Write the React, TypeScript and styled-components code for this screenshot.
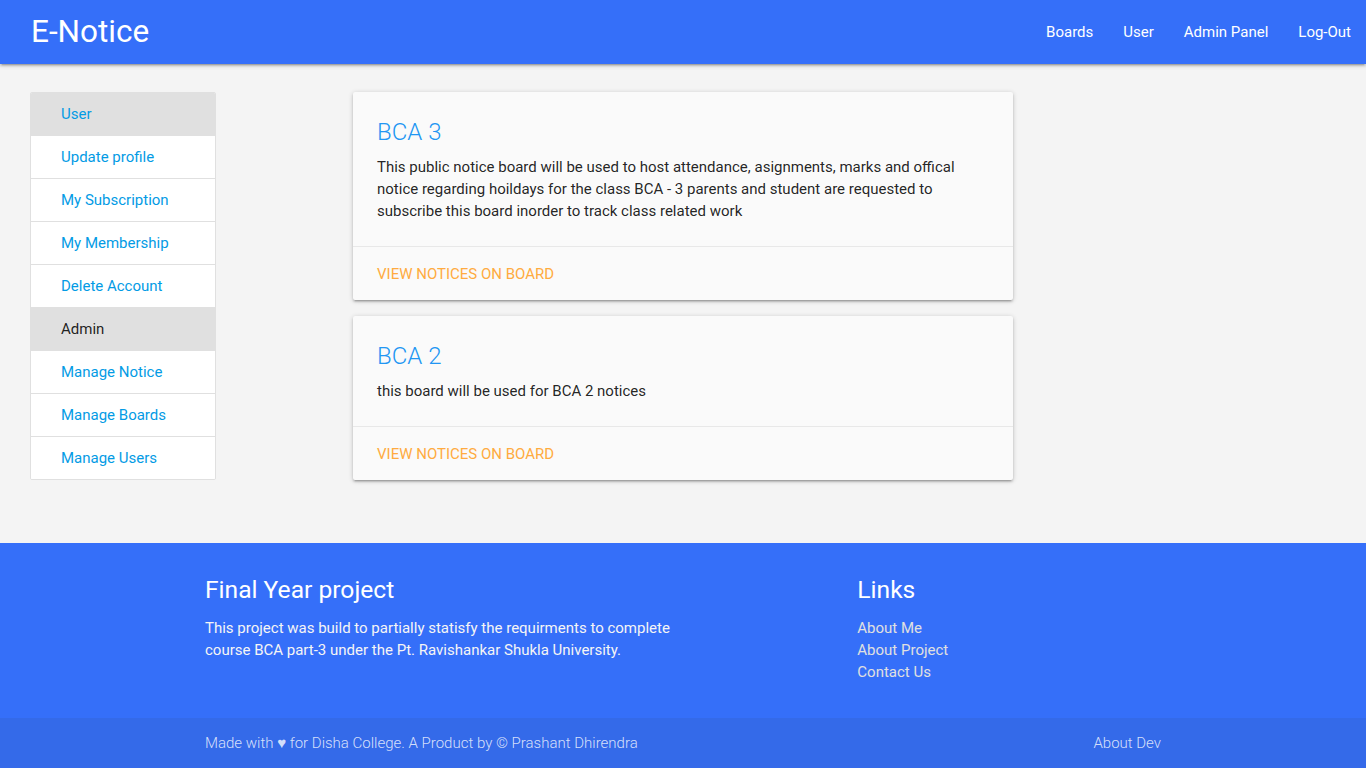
import React, { FC } from 'react'
import styled, { createGlobalStyle } from 'styled-components'

const GlobalStyle = createGlobalStyle`
    html, body {
        margin: 0;
        padding: 0;
    }
    body {
        font-family: Roboto, "Liberation Sans", sans-serif;
        font-size: 15px;
        line-height: 1.5;
        color: rgba(0, 0, 0, 0.87);
        background-color: #f4f4f4;
    }
    * {
        box-sizing: border-box;
    }
    a {
        text-decoration: none;
    }
`

interface Board {
    title: string
    description: string
}

const boards: Board[] = [
    {
        title: 'BCA 3',
        description:
            'This public notice board will be used to host attendance, asignments, marks and offical notice regarding hoildays for the class BCA - 3 parents and student are requested to subscribe this board inorder to track class related work',
    },
    {
        title: 'BCA 2',
        description: 'this board will be used for BCA 2 notices',
    },
]

const userLinks = ['Update profile', 'My Subscription', 'My Membership', 'Delete Account']
const adminLinks = ['Manage Notice', 'Manage Boards', 'Manage Users']

const App: FC = () => {
    return (
        <>
            <GlobalStyle />
            <Nav>
                <Brand href="#">E-Notice</Brand>
                <NavLinks>
                    <NavLink href="#">Boards</NavLink>
                    <NavLink href="#">User</NavLink>
                    <NavLink href="#">Admin Panel</NavLink>
                    <NavLink href="#">Log-Out</NavLink>
                </NavLinks>
            </Nav>

            <Main>
                <Sidebar>
                    <SideItem $header>
                        <SideLink href="#">User</SideLink>
                    </SideItem>
                    {userLinks.map((l) => (
                        <SideItem key={l}>
                            <SideLink href="#">{l}</SideLink>
                        </SideItem>
                    ))}
                    <SideItem $header>
                        <SideLabel>Admin</SideLabel>
                    </SideItem>
                    {adminLinks.map((l) => (
                        <SideItem key={l}>
                            <SideLink href="#">{l}</SideLink>
                        </SideItem>
                    ))}
                </Sidebar>

                <Cards>
                    {boards.map((b) => (
                        <Card key={b.title}>
                            <CardContent>
                                <CardTitle>{b.title}</CardTitle>
                                <CardText>{b.description}</CardText>
                            </CardContent>
                            <CardAction>
                                <ActionLink href="#">View notices on board</ActionLink>
                            </CardAction>
                        </Card>
                    ))}
                </Cards>
            </Main>

            <Footer>
                <FooterRow>
                    <FooterCol>
                        <FooterTitle>Final Year project</FooterTitle>
                        <FooterText>
                            This project was build to partially statisfy the requirments to complete course
                            BCA part-3 under the Pt. Ravishankar Shukla University.
                        </FooterText>
                    </FooterCol>
                    <LinksCol>
                        <FooterTitle>Links</FooterTitle>
                        <FooterList>
                            <li><FooterLink href="#">About Me</FooterLink></li>
                            <li><FooterLink href="#">About Project</FooterLink></li>
                            <li><FooterLink href="#">Contact Us</FooterLink></li>
                        </FooterList>
                    </LinksCol>
                </FooterRow>
                <Copyright>
                    <CopyrightInner>
                        <span>Made with ♥ for Disha College. A Product by © Prashant Dhirendra</span>
                        <CopyLink href="#">About Dev</CopyLink>
                    </CopyrightInner>
                </Copyright>
            </Footer>
        </>
    )
}

export default App

const blue = '#356ff9'

const Nav = styled.nav`
    display: flex;
    align-items: center;
    justify-content: space-between;
    height: 64px;
    padding-left: 31px;
    background-color: ${blue};
    box-shadow: 0 2px 2px 0 rgba(0, 0, 0, 0.14), 0 3px 1px -2px rgba(0, 0, 0, 0.12), 0 1px 5px 0 rgba(0, 0, 0, 0.2);
    position: relative;
    z-index: 2;
`

const Brand = styled.a`
    color: #fff;
    font-size: 31.5px;
    line-height: 64px;
`

const NavLinks = styled.div`
    display: flex;
    height: 100%;
`

const NavLink = styled.a`
    display: flex;
    align-items: center;
    padding: 0 15px;
    color: #fff;
    font-size: 15px;
`

const Main = styled.main`
    display: flex;
    align-items: flex-start;
    gap: 137px;
    padding: 28px 30px 63px;
`

const Sidebar = styled.ul`
    width: 186px;
    margin: 0;
    padding: 0;
    list-style: none;
    border: 1px solid #e0e0e0;
    border-radius: 2px;
    overflow: hidden;
    background-color: #fff;
`

const SideItem = styled.li<{ $header?: boolean }>`
    padding: 10px 20px 10px 30px;
    line-height: 22px;
    background-color: ${(p) => (p.$header ? '#e0e0e0' : '#fff')};
    border-bottom: 1px solid #e0e0e0;

    &:last-child {
        border-bottom: none;
    }
`

const SideLink = styled.a`
    color: #039be5;
    font-size: 15px;
`

const SideLabel = styled.span`
    color: rgba(0, 0, 0, 0.87);
    font-size: 15px;
`

const Cards = styled.div`
    display: flex;
    flex-direction: column;
    gap: 16px;
    width: 660px;
`

const Card = styled.div`
    background-color: #fafafa;
    border-radius: 2px;
    box-shadow: 0 2px 2px 0 rgba(0, 0, 0, 0.14), 0 3px 1px -2px rgba(0, 0, 0, 0.12), 0 1px 5px 0 rgba(0, 0, 0, 0.2);
`

const CardContent = styled.div`
    padding: 24px;
`

const CardTitle = styled.span`
    display: block;
    margin-bottom: 8px;
    color: #2196f3;
    font-size: 24px;
    font-weight: 300;
    line-height: 32px;
`

const CardText = styled.p`
    margin: 0;
    line-height: 22px;
    font-size: 15px;
`

const CardAction = styled.div`
    padding: 17px 24px 15px;
    border-top: 1px solid rgba(160, 160, 160, 0.2);
    line-height: 21px;
`

const ActionLink = styled.a`
    color: #ffab40;
    text-transform: uppercase;
    font-size: 15px;
`

const Footer = styled.footer`
    background-color: ${blue};
    padding-top: 20px;
    color: #fff;
`

const FooterRow = styled.div`
    display: grid;
    grid-template-columns: 6fr 2fr 4fr;
    width: 956px;
    margin: 0 auto;
    padding-bottom: 35px;
`

const FooterCol = styled.div`
    grid-column: 1;
`

const LinksCol = styled.div`
    grid-column: 3;
    padding-left: 15px;
`

const FooterTitle = styled.h5`
    margin: 12px 0 12px;
    font-size: 24.6px;
    font-weight: 400;
    line-height: 30px;
`

const FooterText = styled.p`
    margin: 0;
    max-width: 470px;
    color: #f5f5f5;
    font-size: 15px;
    line-height: 22px;
`

const FooterList = styled.ul`
    margin: 0;
    padding: 0;
    list-style: none;
    line-height: 22px;
`

const FooterLink = styled.a`
    color: #e0e0e0;
    font-size: 15px;
`

const Copyright = styled.div`
    background-color: rgba(51, 51, 51, 0.08);
    height: 50px;
    display: flex;
    align-items: center;
`

const CopyrightInner = styled.div`
    display: flex;
    justify-content: space-between;
    width: 956px;
    margin: 0 auto;
    color: rgba(255, 255, 255, 0.8);
    font-weight: 300;
    font-size: 15px;
`

const CopyLink = styled.a`
    color: rgba(255, 255, 255, 0.8);
`
